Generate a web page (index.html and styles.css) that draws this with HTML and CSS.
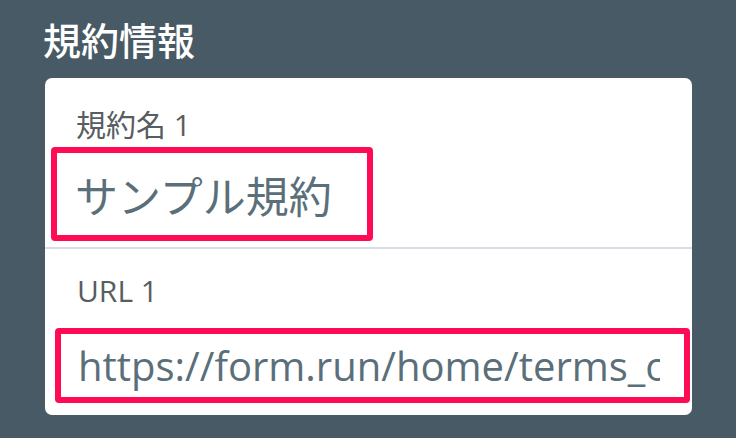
FILE: index.html
```html
<!DOCTYPE html>
<html lang="ja">
<head>
    <meta charset="UTF-8">
    <meta name="viewport" content="width=device-width, initial-scale=1.0">
    <title>規約情報</title>
    <link rel="stylesheet" href="styles.css">
</head>
<body>
    <h2 class="section-title">規約情報</h2>

    <div class="terms-card">
        <div class="field field-name">
            <div class="field-label">規約名 1</div>
            <div class="field-value value-name">サンプル規約</div>
        </div>
        <div class="field field-url">
            <div class="field-label">URL 1</div>
            <div class="field-value value-url">
                <span class="value-clip">https://form.run/home/terms_of_service</span>
            </div>
        </div>
    </div>
</body>
</html>
```

FILE: styles.css
```css
body {
    margin: 0;
    background-color: #475a65;
    font-family: "Open Sans", "Noto Sans CJK JP", sans-serif;
    color: #333;
}

.section-title {
    margin: 0;
    padding: 21px 0 0 43px;
    font-size: 38px;
    line-height: 38px;
    font-weight: 500;
    color: #fff;
}

.terms-card {
    margin: 19px 0 0 45px;
    width: 647px;
    height: 337px;
    background-color: #fff;
    border-radius: 7px;
    overflow: hidden;
}

.field {
    padding-left: 6px;
}

.field-name {
    padding-top: 32px;
    padding-bottom: 6px;
    border-bottom: 2px solid #d8dee3;
}

.field-url {
    padding-top: 27px;
    padding-left: 10px;
}

.field-label {
    padding-left: 25px;
    font-size: 30px;
    line-height: 30px;
    color: #585d61;
}

.field-url .field-label {
    padding-left: 22px;
}

/* resaltado en rojo alrededor del valor */
.field-value {
    border: 6px solid #ff0b55;
    border-radius: 4px;
    box-sizing: border-box;
    display: flex;
    align-items: center;
    color: #5a6f7a;
}

.value-name {
    margin-top: 7px;
    width: 322px;
    height: 94px;
    padding-left: 18px;
    font-size: 43px;
}

.value-url {
    margin-top: 22px;
    width: 635px;
    height: 75px;
    padding: 0 24px 0 17px;
    font-size: 40px;
}

.value-clip {
    display: block;
    overflow: hidden;
    white-space: nowrap;
    width: 100%;
}
```
